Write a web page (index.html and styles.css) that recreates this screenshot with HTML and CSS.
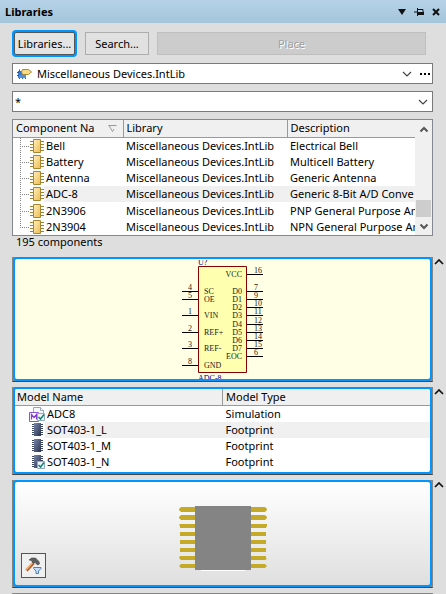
FILE: index.html
```html
<!DOCTYPE html>
<html lang="en">
<head>
<meta charset="utf-8">
<title>Libraries</title>
<link rel="stylesheet" href="styles.css">
</head>
<body>
<svg class="defs" aria-hidden="true">
  <defs>
    <linearGradient id="gold" x1="0" y1="0" x2="1" y2="1"><stop offset="0" stop-color="#fff0bd"/><stop offset="1" stop-color="#eebb50"/></linearGradient>
    <linearGradient id="navy" x1="0" y1="0" x2="1" y2="1"><stop offset="0" stop-color="#7886aa"/><stop offset="1" stop-color="#28324f"/></linearGradient>
    <symbol id="part" viewBox="0 0 14 14">
      <path d="M0 2.500h14M0 5.500h14M0 8.500h14M0 11.500h14" stroke="#9b8435"/>
      <path d="M3.500 .5h7v13h-7z" fill="url(#gold)" stroke="#a8862f"/>
    </symbol>
    <symbol id="chip" viewBox="0 0 14 14">
      <path d="M0 1.500h11M0 3.500h11M0 5.500h11M0 7.500h11M0 9.500h11M0 11.500h11" stroke="#39435e"/>
      <path d="M2 0h7v13h-7z" fill="url(#navy)"/>
    </symbol>
    <symbol id="check" viewBox="0 0 8 8">
      <path d="M.5 .5h7v7h-7z" fill="#edf6fb" stroke="#8eabc3"/>
      <path d="M1.500 4l2 2 3.500-4.500" fill="none" stroke="#11866f" stroke-width="1.500"/>
    </symbol>
    <symbol id="down" viewBox="0 0 10 6"><path d="M1 1l4 4 4-4" fill="none" stroke="#444" stroke-width="1.200"/></symbol>
    <symbol id="fold" viewBox="0 0 10 6"><path d="M1 5l4-4 4 4" fill="none" stroke="#111" stroke-width="1.700"/></symbol>
  </defs>
</svg>

<header class="titlebar">
  <h1>Libraries</h1>
  <button class="tool" aria-label="Panel menu"><svg width="8" height="6"><path d="M0 0h8L4 6z" fill="#111"/></svg></button>
  <button class="tool" aria-label="Pin"><svg width="10" height="8"><path d="M0 4h4M3.500 0v8M4 1.500h5v5" fill="none" stroke="#111"/><path d="M4 4h6v3h-6z" fill="#111"/></svg></button>
  <button class="tool" aria-label="Close"><svg width="8" height="8"><path d="M1 1l6 6M7 1l-6 6" stroke="#111" stroke-width="2"/></svg></button>
</header>

<main>
  <div class="actions">
    <button class="btn focused">Libraries...</button>
    <button class="btn">Search...</button>
    <button class="btn place" disabled>Place</button>
  </div>

  <div class="combo library">
    <svg width="16" height="12" viewBox="0 0 16 12" aria-hidden="true">
      <path d="M1 3h5v7H1z" fill="#3978cf"/>
      <path d="M0 4.500h2M0 7.500h2M2.500 9v2M5.500 9v2M8.500 9v2M2.500 1.500v2" stroke="#245aa6"/>
      <path d="M2 7h7v3H2z" fill="#528fe0"/>
      <path d="M5.500 1.500h6l3 2.500-3 2.500h-6l-1-2.500z" fill="#f8dc83" stroke="#a98738"/>
    </svg>
    <select aria-label="Library"><option>Miscellaneous Devices.IntLib</option></select>
    <svg width="10" height="6" class="arrow"><use href="#down"/></svg>
    <button class="more" aria-label="More"><svg width="11" height="2"><path d="M0 0h2v2H0zM4 0h2v2H4zM8 0h2v2H8z"/></svg></button>
  </div>

  <div class="combo">
    <input type="text" value="*" aria-label="Filter">
    <button class="more" aria-label="Filter history"><svg width="10" height="6"><use href="#down"/></svg></button>
  </div>

  <div class="list">
    <table class="components">
      <colgroup><col class="c-name"><col class="c-lib"><col></colgroup>
      <thead><tr>
        <th><span class="sort">Component Na<svg width="9" height="7"><path d="M.5 .5h8M1 .5L4.500 6.500 6 4" fill="none" stroke="#999"/></svg></span></th>
        <th>Library</th><th>Description</th>
      </tr></thead>
      <tbody>
        <tr><td><span class="node"><svg width="14" height="14"><use href="#part"/></svg><span>Bell</span></span></td><td>Miscellaneous Devices.IntLib</td><td>Electrical Bell</td></tr>
        <tr><td><span class="node"><svg width="14" height="14"><use href="#part"/></svg><span>Battery</span></span></td><td>Miscellaneous Devices.IntLib</td><td>Multicell Battery</td></tr>
        <tr><td><span class="node"><svg width="14" height="14"><use href="#part"/></svg><span>Antenna</span></span></td><td>Miscellaneous Devices.IntLib</td><td>Generic Antenna</td></tr>
        <tr class="selected"><td><span class="node"><svg width="14" height="14"><use href="#part"/></svg><span>ADC-8</span></span></td><td>Miscellaneous Devices.IntLib</td><td>Generic 8-Bit A/D Conve</td></tr>
        <tr><td><span class="node"><svg width="14" height="14"><use href="#part"/></svg><span>2N3906</span></span></td><td>Miscellaneous Devices.IntLib</td><td>PNP General Purpose Am</td></tr>
        <tr><td><span class="node last"><svg width="14" height="14"><use href="#part"/></svg><span>2N3904</span></span></td><td>Miscellaneous Devices.IntLib</td><td>NPN General Purpose Am</td></tr>
      </tbody>
    </table>
    <div class="scroll">
      <svg width="10" height="7"><path d="M1.500 5.500L5 2l3.500 3.500" fill="none" stroke="#555" stroke-width="2"/></svg>
      <div class="track"><div class="thumb"></div></div>
      <svg width="10" height="7"><path d="M1.500 1.500L5 5l3.500-3.500" fill="none" stroke="#555" stroke-width="2"/></svg>
    </div>
  </div>
  <p class="count">195 components</p>

  <section class="panel">
    <div class="frame symbol">
      <svg width="105" height="119" viewBox="170 260 105 119" class="schematic" role="img" aria-label="ADC-8 symbol">
        <path d="M198.500 266.500h48v106h-48z" fill="#ffffb0" stroke="#850000"/>
        <path d="M182 291.500h16M182 299.500h16M182 315.500h16M182 332.500h16M182 348.500h16M182 365.500h16M247 274.500h16M247 291.500h16M247 299.500h16M247 307.500h16M247 315.500h16M247 324.500h16M247 332.500h16M247 340.500h16M247 348.500h16M247 356.500h16" stroke="#000"/>
        <g>
          <text x="204" y="294">SC</text><text x="204" y="302">OE</text><text x="204" y="318">VIN</text><text x="204" y="335">REF+</text><text x="204" y="351">REF-</text><text x="204" y="368">GND</text>
        </g>
        <g text-anchor="end">
          <text x="242" y="277">VCC</text><text x="242" y="294">D0</text><text x="242" y="302">D1</text><text x="242" y="310">D2</text><text x="242" y="318">D3</text><text x="242" y="327">D4</text><text x="242" y="335">D5</text><text x="242" y="343">D6</text><text x="242" y="351">D7</text><text x="242" y="359">EOC</text>
        </g>
        <g>
          <text x="188" y="290">4</text><text x="188" y="298">5</text><text x="188" y="314">1</text><text x="188" y="331">2</text><text x="188" y="347">3</text><text x="188" y="364">8</text>
          <text x="254" y="273">16</text><text x="254" y="290">7</text><text x="254" y="298">9</text><text x="254" y="306">10</text><text x="254" y="314">11</text><text x="254" y="323">12</text><text x="254" y="331">13</text><text x="254" y="339">14</text><text x="254" y="347">15</text><text x="254" y="355">6</text>
        </g>
        <g class="designator"><text x="198" y="265">U?</text><text x="198" y="381">ADC-8</text></g>
      </svg>
    </div>
    <button class="collapse" aria-label="Collapse symbol"><svg width="10" height="6"><use href="#fold"/></svg></button>
  </section>

  <section class="panel">
    <div class="frame">
      <table class="models">
        <thead><tr><th>Model Name</th><th>Model Type</th></tr></thead>
        <tbody>
          <tr><td><span class="model"><svg width="16" height="15" viewBox="0 0 16 15"><path d="M4.500 .5h7l3 3v10h-10z" fill="#f4f7fc" stroke="#9aa4bd"/><path d="M11.500 .5v3h3" fill="#fff" stroke="#9aa4bd"/><path d="M.5 5.500h9v9h-9z" fill="#fff" stroke="#8c55cd"/><path d="M2.500 12.500V7.500L5 10.500 7.500 7.500v5" fill="none" stroke="#8440cc" stroke-width="1.300"/><use href="#check" x="8" y="6" width="8" height="8"/></svg><span>ADC8</span></span></td><td>Simulation</td></tr>
          <tr class="selected"><td><span class="model"><svg width="16" height="14"><use href="#chip" x="3" width="14" height="14"/></svg><span>SOT403-1_L</span></span></td><td>Footprint</td></tr>
          <tr><td><span class="model"><svg width="16" height="14"><use href="#chip" x="3" width="14" height="14"/></svg><span>SOT403-1_M</span></span></td><td>Footprint</td></tr>
          <tr><td><span class="model"><svg width="16" height="14"><use href="#chip" x="3" width="14" height="14"/><use href="#check" x="8" y="6" width="8" height="8"/></svg><span>SOT403-1_N</span></span></td><td>Footprint</td></tr>
        </tbody>
      </table>
    </div>
    <button class="collapse" aria-label="Collapse models"><svg width="10" height="6"><use href="#fold"/></svg></button>
  </section>

  <section class="panel">
    <div class="frame preview">
      <svg width="88" height="65" viewBox="179 505 88 65" role="img" aria-label="Footprint preview">
        <path d="M201 569h44v1h-44z" fill="#fff"/>
        <path d="M179 508l2-2h84l2 2v1l-2 2h-84l-2-2zM179 516l2-2h84l2 2v1l-2 2h-84l-2-2zM179 524l1-1h87v2l-1 2h-86v-2zM180 531h86v4h-86zM180 539h86v4h-86zM180 547h86v4h-86zM180 555h86v2l1 1-2 1h-84l-2-2zM181 563h84l2 2-2 2h-84l-2-2z" fill="#c5aa28"/>
        <path d="M195 505h56v64h-56z" fill="#848484"/>
      </svg>
      <button class="hammer" aria-label="Preview options"><svg width="17" height="17" viewBox="0 0 17 17">
        <path d="M1.500 13.500L8.500 6" stroke="#ad592a" stroke-width="3"/><path d="M1.200 12.800L8 5.500" stroke="#f5b870" stroke-width="1.300"/>
        <path d="M4 3L6.500 1h4L14 4.500l.5 2.500-2 1-2.500-2.500L8 6.500 6.500 3.500z" fill="#5c6060" stroke="#333" stroke-width=".5"/>
        <path d="M8.500 10.500h7.500v1l-2.500 2.500v2.500h-2.500V14l-2.500-2.500z" fill="#c2dcfa" stroke="#4d82bf"/>
      </svg></button>
    </div>
    <button class="collapse" aria-label="Collapse preview"><svg width="10" height="6"><use href="#fold"/></svg></button>
  </section>
  <div class="next"></div>
</main>
</body>
</html>
```
FILE: styles.css
```css
* { box-sizing: border-box; }
html { height: 100%; overflow: hidden; }
body {
  margin: 0;
  background: #dedede;
  color: #000;
  font: 11px/16px "Noto Sans", "Open Sans", sans-serif;
}
button, input, select { font: inherit; color: inherit; }
button { padding: 0; border: 0; background: none; }
svg { display: block; flex: none; }
.defs { position: absolute; width: 0; height: 0; }

.titlebar {
  display: flex;
  align-items: center;
  gap: 8px;
  height: 23px;
  padding: 0 6px 0 5px;
  background: linear-gradient(#b5d2e8, #a4c5da);
}
.titlebar h1 { flex: 1; margin: 0; font-size: 11px; font-weight: 700; }

main { padding: 9px 13px 0 12px; }

.actions { display: flex; gap: 8px; height: 23px; margin: 0 7px 8px 0; }
.btn { width: 64px; border: 1px solid #adadad; background: #e1e1e1; }
.focused {
  width: 61px;
  margin: 0 2px;
  border-color: #555;
  border-radius: 2px;
  box-shadow: 0 0 0 2px #0096ff;
  outline: 0;
  background: #e4e4e4;
}
.place { flex: 1; border-color: #bfbfbf; background: #ccc; color: #a0a0a0; text-shadow: 1px 1px #fff; }

.combo {
  display: flex;
  align-items: center;
  height: 21px;
  margin-bottom: 7px;
  padding: 0 4px 0 2px;
  border: 1px solid #7a7a7a;
  background: #fff;
}
.library { gap: 4px; padding: 0 1px 0 4px; }
.combo select, .combo input {
  flex: 1;
  min-width: 0;
  padding: 0;
  border: 0;
  outline: 0;
  background: none;
  appearance: none;
}
.arrow { margin-right: 4px; }

.list { display: flex; height: 117px; border: 1px solid #828790; background: #fff; }
table { width: 100%; border-collapse: collapse; table-layout: fixed; }
.components { flex: 1; width: 0; }
.c-name { width: 110px; }
.c-lib { width: 164px; }
th, td { height: 16px; padding: 0; overflow: hidden; font-weight: 400; text-align: left; white-space: nowrap; }
th {
  height: 17px;
  padding-left: 3px;
  border-bottom: 1px solid #999;
  background: #f0f0f0;
}
th + th { border-left: 1px solid #999; }
td + td { padding-left: 3px; }
.selected td + td { background: #f0f0f0; }
.sort { display: flex; align-items: center; gap: 14px; }

.node, .model { display: flex; align-items: center; height: 16px; padding-left: 17px; }
.node > span, .model > span { flex: 1; height: 16px; padding-left: 2px; }
.selected .node > span, .selected .model > span { background: #f0f0f0; }
.node {
  margin-left: 7px;
  padding-left: 10px;
  background:
    repeating-linear-gradient(#888 0 1px, transparent 1px 2px) 0 0 / 1px 100% no-repeat,
    repeating-linear-gradient(90deg, #888 0 1px, transparent 1px 2px) 0 8px / 9px 1px no-repeat;
}
.last { background-size: 1px 9px, 9px 1px; }
.model { padding-left: 14px; }

.scroll {
  display: flex;
  flex-direction: column;
  align-items: center;
  width: 17px;
  padding: 6px 1px 5px;
  background: #f0f0f0;
}
.track { display: flex; flex: 1; flex-direction: column; justify-content: flex-end; width: 15px; padding-bottom: 6px; }
.thumb { height: 17px; background: #cdcdcd; }

.count { height: 16px; margin: -2px 0 7px; padding-left: 4px; }

.panel {
  position: relative;
  margin-bottom: 5px;
  border: 1px solid #858585;
  border-width: 0 1px 1px;
  border-bottom-color: #444;
  background: #858585;
}
.frame { border: 2px solid #0096ff; border-radius: 4px; background: #fff; overflow: hidden; }
.collapse { position: absolute; top: 2px; right: -12px; }

.symbol { display: flex; justify-content: center; padding: 1px 0 0; background: #ffffe6; }
.schematic text { font: 8px "Liberation Serif", serif; fill: #222; }
.schematic .designator text { fill: #000080; }

.models { margin-bottom: 2px; }
.models th { height: 16px; padding-left: 2px; }
.models th + th { padding-left: 3px; }

.preview {
  position: relative;
  display: flex;
  justify-content: center;
  padding: 24px 0 14px;
  background: linear-gradient(#fff, #dfdfdf);
}
.hammer {
  position: absolute;
  left: 6px;
  bottom: 7px;
  padding: 3px;
  border: 1px solid #555;
  background: #f0f0f0;
}
.next { height: 8px; border: 1px solid #858585; background: #fff; }
```
